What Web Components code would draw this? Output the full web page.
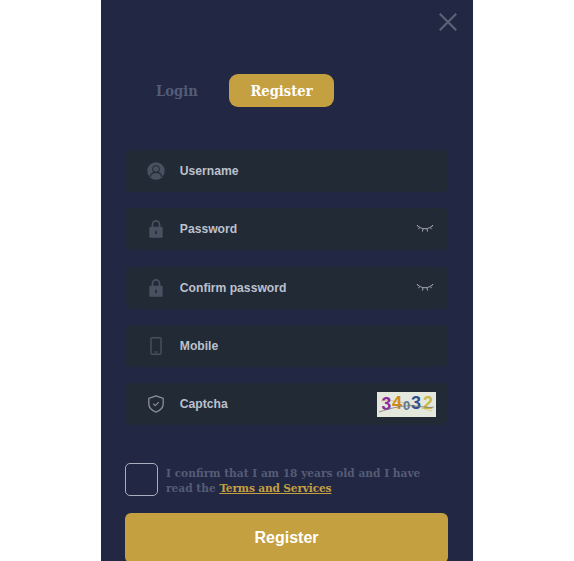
<!DOCTYPE html>
<html><head><meta charset="utf-8">
<style>
html,body{margin:0;padding:0;height:561px;overflow:hidden;background:#fff}
body{display:flex;justify-content:flex-start;padding-left:101px;box-sizing:border-box;font-family:"Liberation Sans",Arial,sans-serif}
</style></head><body>
<auth-panel>
  <auth-tabs></auth-tabs>
  <form-field label="Username" icon="user"></form-field>
  <form-field label="Password" icon="lock" eye></form-field>
  <form-field label="Confirm password" icon="lock" eye></form-field>
  <form-field label="Mobile" icon="phone"></form-field>
  <form-field label="Captcha" icon="shield" captcha></form-field>
  <terms-check></terms-check>
  <submit-button>Register</submit-button>
</auth-panel>
<script>
const ICONS={
user:'<svg width="18" height="18" viewBox="0 0 18 18"><circle cx="9" cy="9" r="8.7" fill="#49505f"/><circle cx="9" cy="7" r="3.8" fill="#222a36"/><circle cx="9" cy="7" r="2.8" fill="#49505f"/><path d="M3.200 14.800c.7-3 2.900-4.400 5.800-4.400s5.100 1.400 5.800 4.400" fill="none" stroke="#222a36" stroke-width="1.100"/></svg>',
lock:'<svg width="18" height="18" viewBox="0 0 18 18"><path d="M5.500 8V4.300a3.500 3.500 0 0 1 7 0V8" fill="none" stroke="#49505f" stroke-width="1.700"/><rect x="2.300" y="6.800" width="13.400" height="11" rx="1.300" fill="#49505f"/><rect x="8.200" y="10.800" width="1.600" height="3.400" fill="#222a36"/></svg>',
phone:'<svg width="18" height="18" viewBox="0 0 18 18"><rect x="4" y=".7" width="10" height="16.600" rx="1.400" fill="none" stroke="#49505f" stroke-width="1.400"/><rect x="7.600" y="14.400" width="2.800" height="1.300" fill="#49505f"/></svg>',
shield:'<svg width="18" height="18" viewBox="0 0 18 18"><path d="M9 .9l7.200 2.500v5.200c0 4.200-3.200 7.200-7.200 8.500-4-1.300-7.200-4.300-7.200-8.500V3.400z" fill="none" stroke="#8a909b" stroke-width="1.300" stroke-linejoin="round"/><path d="M6.200 8.700l2 2 3.600-3.500" fill="none" stroke="#8a909b" stroke-width="1.100"/></svg>'
};
const EYE='<svg width="18" height="10" viewBox="0 0 18 10"><path d="M1 1C5 6 13 6 17 1M1 1l1.700 2.200M3.700 3.600L2.400 5.200M7 5l-.6 2.600M11 5l.6 2.600M14.300 3.600l1.300 1.600M17 1l-1.700 2.200" fill="none" stroke="#a3a8b0" stroke-width="1"/></svg>';
const CAPTCHA='<svg width="59" height="25" viewBox="0 0 59 25" style="display:block"><rect width="59" height="25" fill="#e4e8dc"/><path d="M4 9C18 7 30 12 55 19" stroke="#d8c98a" stroke-width="1" fill="none"/><text x="4.500" y="18" font-size="17.500" fill="#8a2a9e" font-family="Liberation Sans">3</text><text x="15" y="17" font-size="18" fill="#cf8a1d" font-family="Liberation Sans">4</text><text x="26" y="18" font-size="13" fill="#5a7896" font-family="Liberation Sans">0</text><text x="34" y="17" font-size="18" fill="#2f4f8f" font-family="Liberation Sans">3</text><text x="46" y="17" font-size="18" fill="#c9b84a" font-family="Liberation Sans">2</text><path d="M2 20C14 16 26 13 38 14s14 2 19 1" stroke="#777" stroke-width=".8" fill="none"/></svg>';
function define(name,html){customElements.define(name,class extends HTMLElement{connectedCallback(){if(this.shadowRoot)return;const r=this.attachShadow({mode:'open'});r.innerHTML=html(this);}});}
define('auth-panel',()=>`<style>
:host{display:block;width:372px;height:561px;overflow:hidden;background:#222743;box-sizing:border-box;padding:0 25px 0 24px;position:relative}
.close{position:absolute;left:337px;top:12px;width:20px;height:20px}
.stack{display:flex;flex-direction:column}
</style>
<svg class="close" viewBox="0 0 20 20"><path d="M1.800 1.800l16.400 16.400M18.200 1.800L1.800 18.200" stroke="#5b6276" stroke-width="2.200" fill="none"/></svg>
<div class="stack"><slot></slot></div>`);
define('auth-tabs',()=>`<style>
:host{display:flex;align-items:center;margin:74px 0 43px 0;height:33px;font:bold 14.600px "DejaVu Serif",serif;font-stretch:condensed}
.l{margin-left:31px;width:73px;color:#545c76}
.r{width:105px;height:33px;border-radius:9px;background:#c4a040;color:#fff;display:flex;align-items:center;justify-content:center}
</style><span class="l">Login</span><span class="r">Register</span>`);
define('form-field',h=>`<style>
:host{display:flex;align-items:center;height:42px;margin-bottom:16.250px;background:#222a36;border-radius:6px;position:relative;font:bold 12.150px "Liberation Sans",Arial,sans-serif;color:#bcc1cd}
.i{width:18px;height:18px;margin-left:22px;display:flex}
.t{margin-left:14.800px;flex:1}
.e{margin-right:14px;height:10px;display:flex}
.c{margin-right:12px}
</style><span class="i">${ICONS[h.getAttribute('icon')]}</span><span class="t">${h.getAttribute('label')}</span>${h.hasAttribute('eye')?`<span class="e">${EYE}</span>`:''}${h.hasAttribute('captcha')?`<span class="c">${CAPTCHA}</span>`:''}`);
define('terms-check',()=>`<style>
:host{display:flex;margin-top:21.700px;height:50px;align-items:flex-start;font:bold 11.800px/15px "DejaVu Serif",serif;font-stretch:condensed;color:#545c76}
.b{flex:none;width:31px;height:31px;border:1px solid #a9adbd;border-radius:5px;margin-right:8px}
.t{padding-top:3px}
a{color:#c4a040;text-decoration:underline;letter-spacing:-.16px}
</style><span class="b"></span><span class="t">I confirm that I am 18 years old and I have<br>read the <a>Terms and Services</a></span>`);
define('submit-button',()=>`<style>
:host{display:flex;justify-content:center;align-items:center;height:50px;background:#c4a040;border-radius:6px;color:#fff;font:bold 16px "Liberation Sans",Arial,sans-serif}
</style><slot></slot>`);
</script>
</body></html>
